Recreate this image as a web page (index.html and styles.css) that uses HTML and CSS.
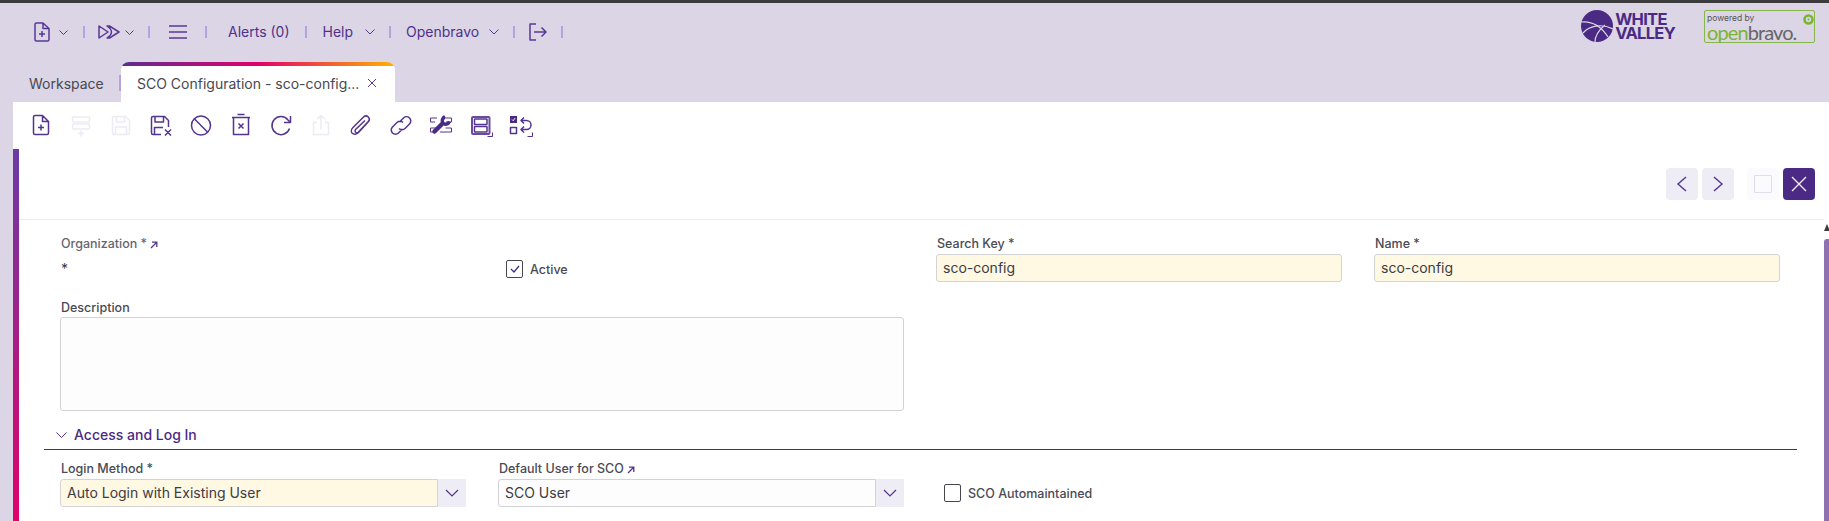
FILE: index.html
```html
<!DOCTYPE html>
<html lang="en">
<head>
<meta charset="utf-8">
<title>SCO Configuration</title>
<link rel="stylesheet" href="styles.css">
</head>
<body>
<div class="topline"></div>
<header class="nav">
  <svg class="ni ni-new" width="16" height="20" viewBox="0 0 16 20"><path d="M1 2.500a1.500 1.500 0 0 1 1.500-1.500h6.500L15 6.500V17.500a1.500 1.500 0 0 1-1.500 1.500h-11A1.500 1.500 0 0 1 1 17.500zM9 1v5.500h6M8 9v6M5 12h6"/></svg>
  <svg class="chev c1" width="9" height="5" viewBox="0 0 9 5"><path d="M.5.500 4.500 4.500 8.500.500"/></svg>
  <span class="sep s1"></span>
  <svg class="ni ni-ff" width="22" height="14" viewBox="0 0 22 14"><path d="M1 1v12l9-6zM9 1h2.500L21 7l-9.500 6H9c3-2 4.500-4 4.500-6S12 3 9 1z"/></svg>
  <svg class="chev c2" width="9" height="5" viewBox="0 0 9 5"><path d="M.5.500 4.500 4.500 8.500.500"/></svg>
  <span class="sep s2"></span>
  <svg class="ni ni-menu" width="18" height="14" viewBox="0 0 18 14"><path d="M0 1h18M0 7h18M0 13h18"/></svg>
  <span class="sep s3"></span>
  <span class="navtxt t-alerts">Alerts (0)</span>
  <span class="sep s4"></span>
  <span class="navtxt t-help">Help</span>
  <svg class="chev c3" width="10" height="6" viewBox="0 0 10 6"><path d="M.5.500 5 5 9.500.500"/></svg>
  <span class="sep s5"></span>
  <span class="navtxt t-ob">Openbravo</span>
  <svg class="chev c4" width="10" height="6" viewBox="0 0 10 6"><path d="M.5.500 5 5 9.500.500"/></svg>
  <span class="sep s6"></span>
  <svg class="ni ni-out" width="18" height="18" viewBox="0 0 18 18"><path d="M7 1H1v16h6M5 9h12M12.500 4.500 17 9l-4.500 4.500"/></svg>
  <span class="sep s7"></span>

  <div class="wv">
    <svg width="32" height="32" viewBox="0 0 32 32"><circle cx="16" cy="16" r="16" fill="#4a2a85"/><path d="M0 12c10-1 20 4 27 15M2 23C8 16 20 13 32 19M14 32c0-6 4-12 10-17" fill="none" stroke="#dbd5e6" stroke-width="1.200"/></svg>
    <div class="wv-text"><span>WHITE</span><span>VALLEY</span></div>
  </div>
  <div class="ob">
    <span class="ob-pw">powered by</span>
    <span class="ob-name"><b>open</b>bravo.</span>
    <svg class="ob-mark" width="11" height="11" viewBox="0 0 11 11"><circle cx="5.500" cy="5.500" r="4" fill="none" stroke="#7ab52f" stroke-width="2.600"/><circle cx="5.500" cy="5.500" r="1" fill="#7ab52f"/></svg>
  </div>
</header>

<nav class="tabs">
  <span class="tab-plain">Workspace</span>
  <span class="tab-sep"></span>
  <div class="tab-active">
    <span>SCO Configuration - sco-config...</span>
    <svg class="tab-x" width="10" height="10" viewBox="0 0 10 10"><path d="M1 1l8 8M9 1l-8 8"/></svg>
  </div>
</nav>

<main class="main">
  <div class="toolbar">
    <button class="tb"><svg width="24" height="24" viewBox="0 0 24 24"><path d="M4.500 4a1.500 1.500 0 0 1 1.500-1.500h7.500l6 6V20a1.500 1.500 0 0 1-1.500 1.500H6A1.500 1.500 0 0 1 4.500 20zM13.500 2.500v6h6M12 11.500v6M9 14.500h6"/></svg></button>
    <button class="tb off"><svg width="24" height="24" viewBox="0 0 24 24"><rect x="3.500" y="4" width="17" height="5" rx="1"/><rect x="3.500" y="11" width="17" height="5" rx="1"/><path d="M12 17.500v6M9 20.500h6"/></svg></button>
    <button class="tb off"><svg width="24" height="24" viewBox="0 0 24 24"><path d="M3.500 5a1.500 1.500 0 0 1 1.500-1.500h11.500l4 4V20a1.500 1.500 0 0 1-1.500 1.500H5A1.500 1.500 0 0 1 3.500 20zM7.500 3.500V9h8V3.500M6.500 21.500V14h11v7.500"/></svg></button>
    <button class="tb"><svg width="24" height="24" viewBox="0 0 24 24"><path d="M12 21.500H4A1.500 1.500 0 0 1 2.500 20V5A1.500 1.500 0 0 1 4 3.500h11.500l4 4V14M6 3.500V9h8.500V3.500M5.500 21.500V14.500h8.500M16 16.500l6 6M22 16.500l-6 6"/></svg></button>
    <button class="tb"><svg width="24" height="24" viewBox="0 0 24 24"><circle cx="12" cy="12.500" r="9.500"/><path d="M5.300 5.800l13.400 13.400"/></svg></button>
    <button class="tb"><svg width="24" height="24" viewBox="0 0 24 24"><path d="M3 4.500h18M8.500 1.500h7M4.500 4.500v17h15v-17M9.500 10.500l5 5M14.500 10.500l-5 5"/></svg></button>
    <button class="tb"><svg width="24" height="24" viewBox="0 0 24 24"><path d="M20.500 15.500A9 9 0 1 1 19 7l2.500 2.500M21.500 3v6.500H15"/></svg></button>
    <button class="tb off"><svg width="24" height="24" viewBox="0 0 24 24"><path d="M8 9.500H4.500v12h15v-12H16M12 16.500V2.500M8 6l4-3.500L16 6"/></svg></button>
    <button class="tb"><svg width="24" height="24" viewBox="0 0 24 24"><path d="M20 8 9.500 19.500c-2 2.200-5 2-6.300.800C2 19 2 16.500 4 14.500L14.500 4c1.500-1.400 3.600-1.200 4.800 0 1.200 1.200 1.300 3.200 0 4.600L9.500 19c-.9.900-2.100.9-2.900.2-.8-.8-.7-2 .2-2.900L16 7.500"/></svg></button>
    <button class="tb"><svg width="24" height="24" viewBox="0 0 24 24"><path d="M10.500 9 14.500 5a4.200 4.200 0 0 1 6 6l-4.500 4.500a4.200 4.200 0 0 1-6 0M13.500 16l-4 4a4.200 4.200 0 0 1-6-6L8 9.500a4.200 4.200 0 0 1 6 0"/></svg></button>
    <button class="tb"><svg width="24" height="24" viewBox="0 0 24 24"><path class="thin" d="M8 5H1.500v4H6M17 5h5.500v4H17M1.500 15v4h5M22.500 15v4H11M7.500 15h-6M22.500 15h-6"/><path class="wr-h" d="M5.500 18.500 12.500 11.500"/><path class="wr-t" d="M16 3.500c-3 2-3.500 5-1.800 6.800C16 12 19 11.500 20.500 8.500"/></svg></button>
    <button class="tb"><svg width="24" height="24" viewBox="0 0 24 24"><rect x="3" y="4" width="17.500" height="17" rx="1" class="thick"/><rect x="5.500" y="6" width="12.500" height="5.500" rx=".5"/><rect x="5.500" y="13.500" width="12.500" height="5.500" rx=".5"/><path class="thin" d="M23.500 19.500v4H18.500"/></svg></button>
    <button class="tb"><svg width="24" height="24" viewBox="0 0 24 24"><rect x="1" y="3" width="7" height="7" class="fill"/><path class="ck" d="M3 6.500l1.200 1.200L6 5.200"/><rect x="1.500" y="14.500" width="6" height="6"/><path d="M13 7.500h4.500a4.500 4.500 0 0 1 0 9H13M15 4.500l-3 3 3 3M15 13.500l-3 3 3 3"/><path class="thin" d="M23.500 19.500v4H18.500"/></svg></button>
  </div>

  <div class="panel">
    <div class="content">
      <div class="viewhead">
        <button class="vb"><svg width="12" height="16" viewBox="0 0 12 16"><path d="M10 1 2 8l8 7"/></svg></button>
        <button class="vb"><svg width="12" height="16" viewBox="0 0 12 16"><path d="M2 1l8 7-8 7"/></svg></button>
        <button class="vb vb-max"><span class="sq"></span></button>
        <button class="vb vb-close"><svg width="16" height="16" viewBox="0 0 16 16"><path d="M1 1l14 14M15 1 1 15"/></svg></button>
      </div>
      <form class="form">
        <div class="f">
          <label class="lbl lbl-dim">Organization * <svg class="ext" width="8" height="8" viewBox="0 0 8 8"><path d="M1 7l5.500-5.500M2 1.200h4.800V6"/></svg></label>
          <div class="ro">*</div>
        </div>
        <div class="f f-check"><span class="cb on"><svg width="10" height="8" viewBox="0 0 10 8"><path d="M1 4l3 3 5-6"/></svg></span><span class="cb-l">Active</span></div>
        <div class="f">
          <label class="lbl">Search Key *</label>
          <div class="inp req">sco-config</div>
        </div>
        <div class="f">
          <label class="lbl">Name *</label>
          <div class="inp req">sco-config</div>
        </div>
        <div class="f f-desc">
          <label class="lbl">Description</label>
          <div class="area"></div>
        </div>
        <div class="section">
          <svg width="11" height="6" viewBox="0 0 11 6"><path d="M.5.500l5 5 5-5"/></svg>
          <span>Access and Log In</span>
        </div>
        <div class="f">
          <label class="lbl">Login Method *</label>
          <div class="sel"><div class="inp req">Auto Login with Existing User</div><span class="sel-b"><svg width="14" height="8" viewBox="0 0 14 8"><path d="M1 1l6 6 6-6"/></svg></span></div>
        </div>
        <div class="f">
          <label class="lbl">Default User for SCO <svg class="ext" width="8" height="8" viewBox="0 0 8 8"><path d="M1 7l5.500-5.500M2 1.200h4.800V6"/></svg></label>
          <div class="sel"><div class="inp plain">SCO User</div><span class="sel-b"><svg width="14" height="8" viewBox="0 0 14 8"><path d="M1 1l6 6 6-6"/></svg></span></div>
        </div>
        <div class="f f-check f-check2"><span class="cb"></span><span class="cb-l">SCO Automaintained</span></div>
      </form>
    </div>
    <div class="scroll"><span class="sc-up"></span><span class="sc-th"></span></div>
  </div>
</main>
</body>
</html>
```
FILE: styles.css
```css
* { box-sizing: border-box; }
html, body { margin: 0; height: 521px; overflow: hidden; }
body {
  background: #dbd5e6;
  font-family: Inter, "Liberation Sans", sans-serif;
  display: flex;
  flex-direction: column;
  color: #4a2a85;
}
svg { display: block; flex: none; }

.topline { height: 3px; background: #3b3b3d; flex: none; }

.nav { height: 59px; flex: none; display: flex; align-items: center; padding: 0 14px 1px 34px; }
.nav svg.ni path { fill: none; stroke: #5a3796; stroke-width: 1.500; stroke-linejoin: round; }
.chev path { fill: none; stroke: #5a3796; stroke-width: 1; }
.c1 { margin-left: 9px; }
.c2 { margin-left: 5px; }
.c3 { margin-left: 12px; }
.c4 { margin-left: 10px; }
.sep { width: 2px; height: 12px; background: #b5a3dd; flex: none; }
.s1 { margin-left: 15px; margin-right: 13px; }
.s2 { margin-left: 14px; margin-right: 19px; }
.s3 { margin-left: 18px; margin-right: 21px; }
.s4 { margin-left: 15px; margin-right: 16px; }
.s5 { margin-left: 14px; margin-right: 15px; }
.s6 { margin-left: 14px; margin-right: 14px; }
.s7 { margin-left: 14px; }
.navtxt { font-size: 14px; color: #4f3189; line-height: 20px; white-space: nowrap; }

.wv { display: flex; align-items: center; gap: 2px; margin-left: auto; margin-top: -12px; }
.wv-text { display: flex; flex-direction: column; font-weight: 700; font-size: 16.500px; line-height: 14px; letter-spacing: -.7px; color: #4a2a85; }
.ob {
  position: relative;
  width: 111px; height: 33px; margin-left: 29px; margin-top: -12px;
  border: 1.500px solid #86b84c; border-radius: 2px; padding: 2px 0 0 2px;
  display: flex; flex-direction: column;
}
.ob-pw { font-size: 8.500px; line-height: 10px; color: #555; }
.ob-name { font-family: Lato, sans-serif; font-size: 20px; line-height: 18px; letter-spacing: -.9px; color: #666; }
.ob-name b { font-weight: 400; color: #7ab52f; }
.ob-mark { position: absolute; right: 0; top: 3px; }

.tabs { height: 40px; flex: none; display: flex; align-items: stretch; padding-left: 29px; font-size: 14px; }
.tab-plain { color: #48484f; align-self: center; margin-top: 2px; width: 90px; }
.tab-sep { width: 2px; height: 16px; background: #b5a3dd; align-self: center; margin-top: 2px; }
.tab-active {
  width: 274px; background: #fff; border-radius: 8px 8px 0 0;
  position: relative; display: flex; align-items: center;
  padding: 2px 0 0 16px; color: #48484f; white-space: nowrap; overflow: hidden;
}
.tab-active::before {
  content: ""; position: absolute; left: 0; right: 0; top: 0; height: 4px;
  background: linear-gradient(90deg, #5b2d91 0%, #e2006a 50%, #ffb300 100%);
}
.tab-x { margin-left: 8px; }
.tab-x path { fill: none; stroke: #5a3796; stroke-width: 1; }

.main { flex: 1; min-height: 0; margin-left: 13px; background: #fff; display: flex; flex-direction: column; }
.toolbar { height: 47px; flex: none; display: flex; align-items: center; padding: 0 0 2px 8px; }
.tb { width: 40px; height: 24px; padding: 0; border: 0; background: none; display: flex; justify-content: center; }
.tb svg * { fill: none; stroke: #54348f; stroke-width: 1.500; stroke-linejoin: round; }
.tb.off svg * { stroke: #ecebf3; }
.tb svg .thin { stroke-width: 1; }
.tb svg .thick { stroke-width: 2; stroke: #6a4ba0; }
.tb svg .wr-h { stroke: #4a2a85; stroke-width: 4.500; stroke-linecap: round; }
.tb svg .wr-t { stroke: #4a2a85; stroke-width: 3.500; }
.tb svg .fill { fill: #4a2a85; stroke: none; }
.tb svg .ck { stroke: #fff; stroke-width: 1; }

.panel { flex: 1; min-height: 0; display: flex; border-left: 6px solid; border-image: linear-gradient(180deg, #6a3ba5 0%, #e2006a 100%) 1; }
.content { flex: 1; min-width: 0; }
.scroll { width: 5px; display: flex; flex-direction: column; align-items: center; margin-top: 75px; }
.sc-up { width: 0; height: 0; border-left: 3px solid transparent; border-right: 3px solid transparent; border-bottom: 7px solid #3b3b3d; }
.sc-th { flex: 1; width: 5px; margin-top: 8px; background: #8e72b0; border-radius: 3px 0 0 0; }

.viewhead { height: 71px; border-bottom: 1px solid #eceaf0; display: flex; justify-content: flex-end; align-items: flex-start; padding: 19px 9px 0 0; gap: 4px; }
.vb { width: 32px; height: 32px; padding: 0; border: 0; border-radius: 4px; background: #eeecf4; display: flex; align-items: center; justify-content: center; }
.vb svg path { fill: none; stroke: #54348f; stroke-width: 1.400; }
.vb-max { background: #fbfbfd; margin-left: 9px; }
.sq { width: 18px; height: 18px; border: 1.500px solid #e0ddef; border-radius: 1px; }
.vb-close { background: #4a2a85; }
.vb-close svg path { stroke: #f0edf7; }

.form {
  display: grid;
  grid-template-columns: repeat(4, 406px);
  column-gap: 32px;
  padding: 15px 0 0 41px;
  grid-template-rows: 47px auto auto auto;
  align-content: start;
}
.f { display: flex; flex-direction: column; min-width: 0; }
.lbl { font-size: 12.500px; font-weight: 500; line-height: 18px; margin-bottom: 1px; padding-left: 1px; color: #4a4a55; display: flex; align-items: center; gap: 0; white-space: pre; }
.lbl-dim { color: #66666f; }
.ext { margin-top: 1px; }
.ext path { fill: none; stroke: #54348f; stroke-width: 1.300; }
.ro { font-size: 14px; color: #3c3c44; line-height: 18px; margin-top: 6px; padding-left: 1px; }

.inp { height: 28px; border: 1px solid #d3d2d4; border-radius: 3px; font-size: 14px; line-height: 26px; padding: 0 5px 0 6px; color: #3c3c44; flex: 1; }
.req { background: #fff8e2; }
.plain { background: #fdfdfd; }
.f-check { flex-direction: row; align-items: center; gap: 7px; padding-left: 8px; margin-top: 25px; align-self: start; height: 18px; }
.f-check2 { margin-top: 0; align-self: end; height: 28px; }
.cb { width: 17px; height: 18px; border: 1.500px solid #46464e; border-radius: 2px; display: flex; align-items: center; justify-content: center; flex: none; }
.cb svg path { fill: none; stroke: #3f2a78; stroke-width: 1.200; }
.cb-l { font-size: 12.500px; font-weight: 500; color: #4a4a55; }

.f-desc { grid-column: 1 / span 2; margin-top: 17px; }
.area { height: 94px; border: 1px solid #d3d2d4; border-radius: 3px; background: #fdfdfd; margin-top: -1px; }

.section { grid-column: 1 / -1; margin: 14px 0 10px -16px; width: 1753px; height: 25px; border-bottom: 1px solid #4a2a85; display: flex; align-items: center; padding: 0 0 5px 12px; gap: 7px; font-size: 14px; font-weight: 500; color: #4a2a85; }
.section svg path { fill: none; stroke: #54348f; stroke-width: 1; }

.sel { display: flex; height: 28px; }
.sel-b { width: 28px; flex: none; background: #eeecf4; display: flex; align-items: center; justify-content: center; }
.sel-b svg path { fill: none; stroke: #54348f; stroke-width: 1.200; }
.sel .inp { border-radius: 3px 0 0 3px; }
```
